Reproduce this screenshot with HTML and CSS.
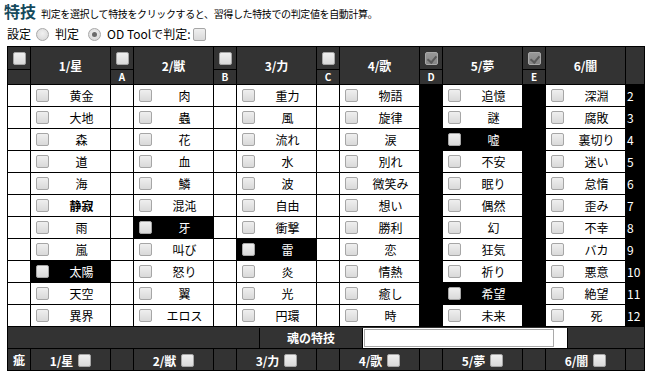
FILE: index.html
```html
<!DOCTYPE html>
<html lang="ja">
<head>
<meta charset="utf-8">
<title>特技</title>
<link rel="stylesheet" href="styles.css">
</head>
<body>
<div class="page">
  <div class="title-row">
    <span class="title">特技</span>
    <span class="desc">判定を選択して特技をクリックすると、習得した特技での判定値を自動計算。</span>
  </div>
  <div class="opts">
    <span class="opt-label">設定</span>
    <input type="radio" name="mode" class="radio">
    <span class="opt-label gap-l">判定</span>
    <input type="radio" name="mode" class="radio radio-r" checked>
    <span class="opt-label gap-l">OD Toolで判定:</span>
    <input type="checkbox" class="cb opt-cb">
  </div>

  <table class="grid">
    <colgroup>
      <col class="c-s"><col class="c-w"><col class="c-s"><col class="c-w"><col class="c-s"><col class="c-w"><col class="c-s"><col class="c-w"><col class="c-s"><col class="c-w"><col class="c-s"><col class="c-w"><col class="c-n">
    </colgroup>
    <thead>
      <tr class="h1">
        <th><input type="checkbox" class="cb"></th>
        <th rowspan="2" class="cat">1/星</th>
        <th><input type="checkbox" class="cb"></th>
        <th rowspan="2" class="cat">2/獣</th>
        <th><input type="checkbox" class="cb"></th>
        <th rowspan="2" class="cat">3/力</th>
        <th><input type="checkbox" class="cb"></th>
        <th rowspan="2" class="cat">4/歌</th>
        <th><input type="checkbox" class="cb" checked></th>
        <th rowspan="2" class="cat">5/夢</th>
        <th><input type="checkbox" class="cb" checked></th>
        <th rowspan="2" class="cat">6/闇</th>
        <th rowspan="2"></th>
      </tr>
      <tr class="h2">
        <th></th>
        <th class="letter">A</th>
        <th class="letter">B</th>
        <th class="letter">C</th>
        <th class="letter">D</th>
        <th class="letter">E</th>
      </tr>
    </thead>
    <tbody>
      <tr>
        <td class="blank"></td>
        <td class="item"><label><input type="checkbox" class="cb"><span>黄金</span></label></td><td class="gap"></td>
        <td class="item"><label><input type="checkbox" class="cb"><span>肉</span></label></td><td class="gap"></td>
        <td class="item"><label><input type="checkbox" class="cb"><span>重力</span></label></td><td class="gap"></td>
        <td class="item"><label><input type="checkbox" class="cb"><span>物語</span></label></td><td class="gap on"></td>
        <td class="item"><label><input type="checkbox" class="cb"><span>追憶</span></label></td><td class="gap on"></td>
        <td class="item"><label><input type="checkbox" class="cb"><span>深淵</span></label></td>
        <td class="num">2</td>
      </tr>
      <tr>
        <td class="blank"></td>
        <td class="item"><label><input type="checkbox" class="cb"><span>大地</span></label></td><td class="gap"></td>
        <td class="item"><label><input type="checkbox" class="cb"><span>蟲</span></label></td><td class="gap"></td>
        <td class="item"><label><input type="checkbox" class="cb"><span>風</span></label></td><td class="gap"></td>
        <td class="item"><label><input type="checkbox" class="cb"><span>旋律</span></label></td><td class="gap on"></td>
        <td class="item"><label><input type="checkbox" class="cb"><span>謎</span></label></td><td class="gap on"></td>
        <td class="item"><label><input type="checkbox" class="cb"><span>腐敗</span></label></td>
        <td class="num">3</td>
      </tr>
      <tr>
        <td class="blank"></td>
        <td class="item"><label><input type="checkbox" class="cb"><span>森</span></label></td><td class="gap"></td>
        <td class="item"><label><input type="checkbox" class="cb"><span>花</span></label></td><td class="gap"></td>
        <td class="item"><label><input type="checkbox" class="cb"><span>流れ</span></label></td><td class="gap"></td>
        <td class="item"><label><input type="checkbox" class="cb"><span>涙</span></label></td><td class="gap on"></td>
        <td class="item sel"><label><input type="checkbox" class="cb"><span>嘘</span></label></td><td class="gap on"></td>
        <td class="item"><label><input type="checkbox" class="cb"><span>裏切り</span></label></td>
        <td class="num">4</td>
      </tr>
      <tr>
        <td class="blank"></td>
        <td class="item"><label><input type="checkbox" class="cb"><span>道</span></label></td><td class="gap"></td>
        <td class="item"><label><input type="checkbox" class="cb"><span>血</span></label></td><td class="gap"></td>
        <td class="item"><label><input type="checkbox" class="cb"><span>水</span></label></td><td class="gap"></td>
        <td class="item"><label><input type="checkbox" class="cb"><span>別れ</span></label></td><td class="gap on"></td>
        <td class="item"><label><input type="checkbox" class="cb"><span>不安</span></label></td><td class="gap on"></td>
        <td class="item"><label><input type="checkbox" class="cb"><span>迷い</span></label></td>
        <td class="num">5</td>
      </tr>
      <tr>
        <td class="blank"></td>
        <td class="item"><label><input type="checkbox" class="cb"><span>海</span></label></td><td class="gap"></td>
        <td class="item"><label><input type="checkbox" class="cb"><span>鱗</span></label></td><td class="gap"></td>
        <td class="item"><label><input type="checkbox" class="cb"><span>波</span></label></td><td class="gap"></td>
        <td class="item"><label><input type="checkbox" class="cb"><span>微笑み</span></label></td><td class="gap on"></td>
        <td class="item"><label><input type="checkbox" class="cb"><span>眠り</span></label></td><td class="gap on"></td>
        <td class="item"><label><input type="checkbox" class="cb"><span>怠惰</span></label></td>
        <td class="num">6</td>
      </tr>
      <tr>
        <td class="blank"></td>
        <td class="item"><label><input type="checkbox" class="cb"><span class="strong">静寂</span></label></td><td class="gap"></td>
        <td class="item"><label><input type="checkbox" class="cb"><span>混沌</span></label></td><td class="gap"></td>
        <td class="item"><label><input type="checkbox" class="cb"><span>自由</span></label></td><td class="gap"></td>
        <td class="item"><label><input type="checkbox" class="cb"><span>想い</span></label></td><td class="gap on"></td>
        <td class="item"><label><input type="checkbox" class="cb"><span>偶然</span></label></td><td class="gap on"></td>
        <td class="item"><label><input type="checkbox" class="cb"><span>歪み</span></label></td>
        <td class="num">7</td>
      </tr>
      <tr>
        <td class="blank"></td>
        <td class="item"><label><input type="checkbox" class="cb"><span>雨</span></label></td><td class="gap"></td>
        <td class="item sel"><label><input type="checkbox" class="cb"><span>牙</span></label></td><td class="gap"></td>
        <td class="item"><label><input type="checkbox" class="cb"><span>衝撃</span></label></td><td class="gap"></td>
        <td class="item"><label><input type="checkbox" class="cb"><span>勝利</span></label></td><td class="gap on"></td>
        <td class="item"><label><input type="checkbox" class="cb"><span>幻</span></label></td><td class="gap on"></td>
        <td class="item"><label><input type="checkbox" class="cb"><span>不幸</span></label></td>
        <td class="num">8</td>
      </tr>
      <tr>
        <td class="blank"></td>
        <td class="item"><label><input type="checkbox" class="cb"><span>嵐</span></label></td><td class="gap"></td>
        <td class="item"><label><input type="checkbox" class="cb"><span>叫び</span></label></td><td class="gap"></td>
        <td class="item sel"><label><input type="checkbox" class="cb"><span>雷</span></label></td><td class="gap"></td>
        <td class="item"><label><input type="checkbox" class="cb"><span>恋</span></label></td><td class="gap on"></td>
        <td class="item"><label><input type="checkbox" class="cb"><span>狂気</span></label></td><td class="gap on"></td>
        <td class="item"><label><input type="checkbox" class="cb"><span>バカ</span></label></td>
        <td class="num">9</td>
      </tr>
      <tr>
        <td class="blank"></td>
        <td class="item sel"><label><input type="checkbox" class="cb"><span>太陽</span></label></td><td class="gap"></td>
        <td class="item"><label><input type="checkbox" class="cb"><span>怒り</span></label></td><td class="gap"></td>
        <td class="item"><label><input type="checkbox" class="cb"><span>炎</span></label></td><td class="gap"></td>
        <td class="item"><label><input type="checkbox" class="cb"><span>情熱</span></label></td><td class="gap on"></td>
        <td class="item"><label><input type="checkbox" class="cb"><span>祈り</span></label></td><td class="gap on"></td>
        <td class="item"><label><input type="checkbox" class="cb"><span>悪意</span></label></td>
        <td class="num">10</td>
      </tr>
      <tr>
        <td class="blank"></td>
        <td class="item"><label><input type="checkbox" class="cb"><span>天空</span></label></td><td class="gap"></td>
        <td class="item"><label><input type="checkbox" class="cb"><span>翼</span></label></td><td class="gap"></td>
        <td class="item"><label><input type="checkbox" class="cb"><span>光</span></label></td><td class="gap"></td>
        <td class="item"><label><input type="checkbox" class="cb"><span>癒し</span></label></td><td class="gap on"></td>
        <td class="item sel"><label><input type="checkbox" class="cb"><span>希望</span></label></td><td class="gap on"></td>
        <td class="item"><label><input type="checkbox" class="cb"><span>絶望</span></label></td>
        <td class="num">11</td>
      </tr>
      <tr>
        <td class="blank"></td>
        <td class="item"><label><input type="checkbox" class="cb"><span>異界</span></label></td><td class="gap"></td>
        <td class="item"><label><input type="checkbox" class="cb"><span>エロス</span></label></td><td class="gap"></td>
        <td class="item"><label><input type="checkbox" class="cb"><span>円環</span></label></td><td class="gap"></td>
        <td class="item"><label><input type="checkbox" class="cb"><span>時</span></label></td><td class="gap on"></td>
        <td class="item"><label><input type="checkbox" class="cb"><span>未来</span></label></td><td class="gap on"></td>
        <td class="item"><label><input type="checkbox" class="cb"><span>死</span></label></td>
        <td class="num">12</td>
      </tr>
      <tr class="soul">
        <td colspan="13" class="soul-cell">
          <div class="soul-row">
            <div class="soul-pad"></div>
            <div class="soul-label">魂の特技</div>
            <div class="soul-field"><input type="text" class="soul-input"></div>
            <div class="soul-rest"></div>
          </div>
        </td>
      </tr>
      <tr class="foot">
        <th class="scar">疵</th>
        <th><span class="ft">1/星</span><input type="checkbox" class="cb"></th><th></th>
        <th><span class="ft">2/獣</span><input type="checkbox" class="cb"></th><th></th>
        <th><span class="ft">3/力</span><input type="checkbox" class="cb"></th><th></th>
        <th><span class="ft">4/歌</span><input type="checkbox" class="cb"></th><th></th>
        <th><span class="ft">5/夢</span><input type="checkbox" class="cb"></th><th></th>
        <th><span class="ft">6/闇</span><input type="checkbox" class="cb"></th>
        <th></th>
      </tr>
    </tbody>
  </table>
</div>
</body>
</html>
```

FILE: styles.css
```css
* { box-sizing: border-box; }

body {
  margin: 0;
  background: #fff;
  color: #000;
  font-family: "Noto Sans CJK JP", "Noto Sans", sans-serif;
}

.page {
  padding: 0 3px 0 7px;
}

.title-row {
  display: flex;
  align-items: baseline;
  height: 22px;
  margin-left: -3px;
}

.title {
  font-size: 16px;
  font-weight: bold;
  color: #154a5c;
  line-height: 23px;
}

.desc {
  font-size: 10px;
  line-height: 14px;
  letter-spacing: -0.37px;
  margin-left: 5px;
}

.opts {
  display: flex;
  align-items: center;
  height: 24px;
  font-size: 12px;
  line-height: 14px;
}

.opts .radio { margin-left: 5px; }
.opts .gap-l { margin-left: 6px; }
.opts .radio-r { margin-left: 9px; }
.opts .opt-cb { margin-left: 3px; }

/* radios */
.radio {
  appearance: none;
  -webkit-appearance: none;
  width: 13px;
  height: 13px;
  margin: 0;
  border: 1px solid #a9a9a9;
  border-radius: 50%;
  background: radial-gradient(circle at 50% 40%, #f0f0f0, #d4d4d4);
  position: relative;
}
.radio:checked::after {
  content: "";
  position: absolute;
  left: 3px;
  top: 3px;
  width: 5px;
  height: 5px;
  border-radius: 50%;
  background: #6a6a6a;
}

/* checkboxes */
.cb {
  appearance: none;
  -webkit-appearance: none;
  width: 13px;
  height: 13px;
  margin: 0;
  border: 1px solid #a6a6a6;
  border-radius: 2px;
  background: linear-gradient(#efefef, #d9d9d9);
  position: relative;
  flex: none;
  vertical-align: middle;
}
.cb:checked {
  background: linear-gradient(#989898, #858585);
  border-color: #a8a8a8;
}
.cb:checked::after {
  content: "";
  position: absolute;
  left: 3px;
  top: 1px;
  width: 4px;
  height: 7px;
  border: solid #5a5a5a;
  border-width: 0 2px 2px 0;
  transform: rotate(40deg);
}

/* table */
.grid {
  border-collapse: collapse;
  table-layout: fixed;
  width: 637px;
  font-size: 12px;
}

.c-s { width: 23px; }
.c-w { width: 80px; }
.c-n { width: 19px; }

.grid th,
.grid td {
  border: 1px solid #000;
  padding: 0;
}

.grid th {
  background: #333;
  color: #fff;
  font-weight: bold;
  text-align: center;
  vertical-align: middle;
}

.h1 th { height: 23px; }
.h1 th .cb { display: block; margin: 0 auto; }
.h2 th { height: 15px; }

.cat { font-size: 12px; line-height: 14px; }

.letter {
  font-size: 10px;
  line-height: 12px;
}

.grid td { height: 22px; }

.blank { background: #fff; }
.gap { background: #fff; }
.gap.on { background: #000; }

.item {
  background: #fff;
  padding-left: 5px !important;
}
.item label {
  display: flex;
  align-items: center;
}
.item label span {
  flex: 1;
  text-align: center;
  line-height: 14px;
}
.item .cb { margin-right: 4px; }

.item.sel {
  background: #000;
  color: #fff;
}

.strong { font-weight: bold; }

.num {
  background: #000;
  color: #fff;
  font-size: 12px;
  text-align: left;
  padding-left: 1px !important;
}

/* soul row */
.soul-cell {
  background: #333;
  padding: 0;
}
.soul-row {
  display: flex;
  height: 20px;
}
.soul-pad {
  width: 252px;
  border-right: 1px solid #000;
}
.soul-label {
  width: 103px;
  border-right: 1px solid #000;
  color: #fff;
  font-weight: bold;
  font-size: 12px;
  text-align: center;
  line-height: 20px;
}
.soul-field {
  width: 205px;
  border-right: 1px solid #000;
  background: #fff;
  padding: 1px 0 0 1px;
}
.soul-input {
  display: block;
  width: 190px;
  height: 18px;
  border: 1px solid #a9a9a9;
  margin: 0;
  padding: 0;
}
.soul-rest { flex: 1; }

/* footer row */
.foot th { height: 22px; }
.foot .ft { margin-right: 5px; vertical-align: middle; }
.scar { font-size: 12px; }
```
